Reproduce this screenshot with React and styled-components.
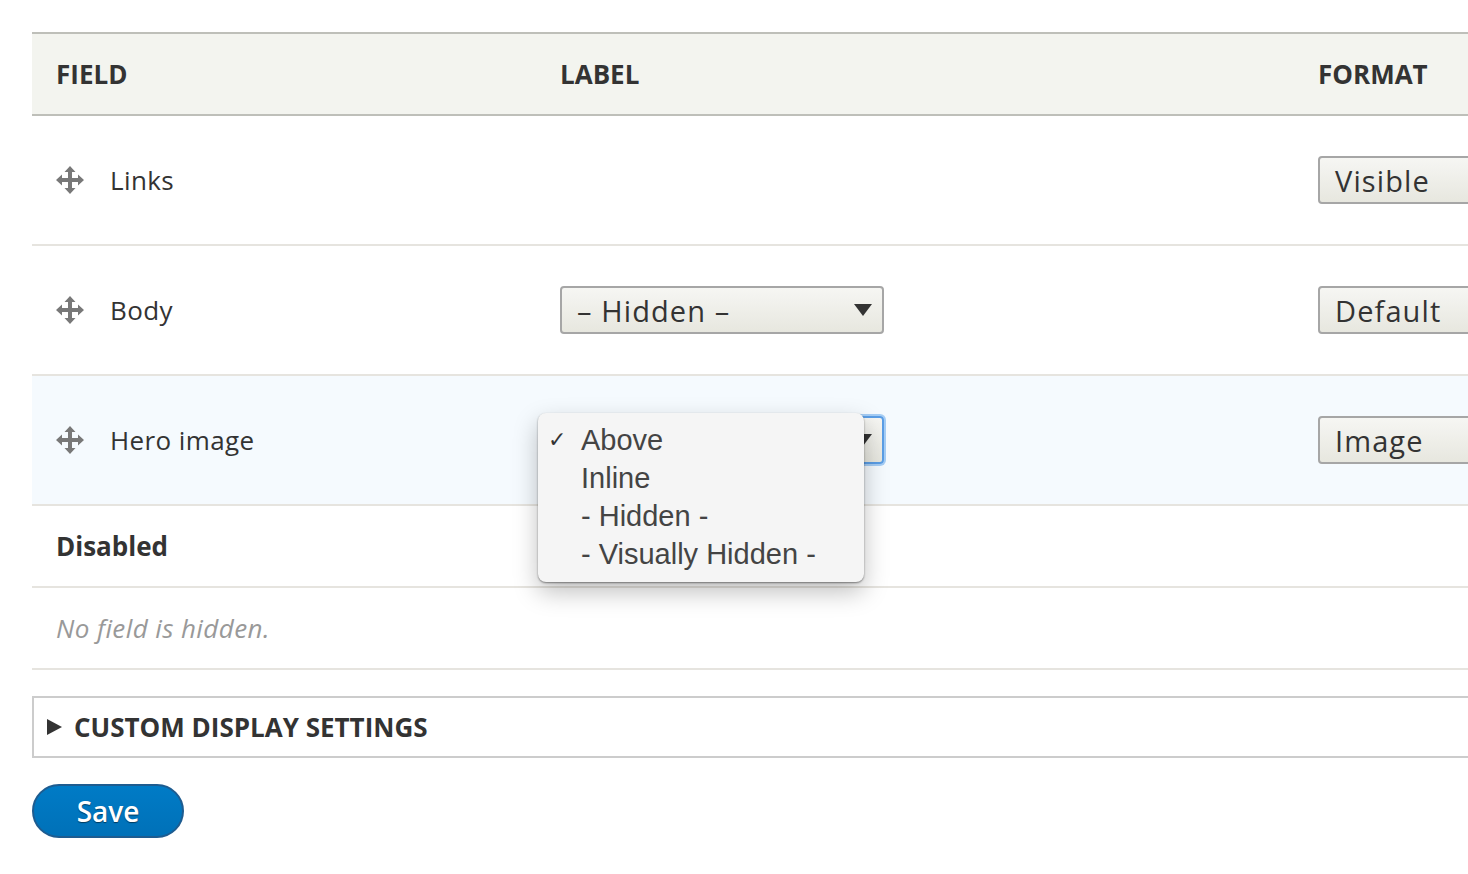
import styled, { createGlobalStyle } from "styled-components";

const GlobalStyle = createGlobalStyle`
  html, body {
    margin: 0;
    padding: 0;
    background: #fff;
    overflow: hidden;
  }
  body {
    font-family: "Open Sans", "Noto Sans", "Liberation Sans", sans-serif;
    color: #333;
  }
`;

const Page = styled.div`
  width: 1468px;
  height: 874px;
  box-sizing: border-box;
  padding: 32px 0 0 32px;
  overflow: hidden;
`;

const Row = styled.div`
  display: grid;
  grid-template-columns: 504px 758px 1fr;
  align-items: center;
  box-sizing: border-box;
  height: ${(p) => p.$height || 130}px;
  background: ${(p) => p.$bg || "#fff"};
  border-bottom: 2px solid #e6e4df;
`;

const HeaderRow = styled(Row)`
  height: 84px;
  background: #f3f4ef;
  border-top: 2px solid #bebfb9;
  border-bottom: 2px solid #bebfb9;
`;

const HeadCell = styled.div`
  padding-left: 24px;
  font-size: 26px;
  font-weight: 700;
  color: #333;
`;

const FieldCell = styled.div`
  display: flex;
  align-items: center;
  gap: 26px;
  padding-left: 24px;
  font-size: 26px;
  letter-spacing: 0.4px;
  color: #333;
`;

const Cell = styled.div`
  position: relative;
  padding-left: 24px;
`;

const Select = styled.div`
  display: flex;
  align-items: center;
  justify-content: space-between;
  box-sizing: border-box;
  width: ${(p) => p.$width || 324}px;
  height: 48px;
  padding: 0 10px 0 15px;
  border: 2px solid ${(p) => (p.$focus ? "#5b9ee6" : "#a6a6a6")};
  border-radius: 4px;
  background: linear-gradient(#f6f6f3, #e7e7df);
  box-shadow: ${(p) => (p.$focus ? "0 0 0 2px #a5cdf5" : "none")};
  font-size: 29px;
  letter-spacing: 1.1px;
  color: #333;
  white-space: nowrap;
`;

const Caret = styled.span`
  width: 0;
  height: 0;
  border-left: 9px solid transparent;
  border-right: 9px solid transparent;
  border-top: 12px solid #333;
`;

const Popup = styled.div`
  position: absolute;
  left: 2px;
  top: -3px;
  box-sizing: border-box;
  width: 326px;
  height: 169px;
  padding: 8px 0 0;
  background: #f5f5f5;
  border-radius: 8px;
  box-shadow: 0 1px 2px rgba(0, 0, 0, 0.45), 0 10px 24px rgba(0, 0, 0, 0.25);
  font-family: "Liberation Sans", Arial, sans-serif;
  font-size: 29px;
  color: #444;
`;

const Option = styled.div`
  position: relative;
  height: 38px;
  line-height: 38px;
  padding-left: 43px;
  white-space: nowrap;
`;

const Check = styled.span`
  position: absolute;
  left: 10px;
  top: 0;
  font-family: "DejaVu Sans", sans-serif;
  font-size: 22px;
  color: #333;
`;

const SectionRow = styled(Row)`
  display: flex;
  padding-left: 24px;
  height: 82px;
  font-size: 26px;
  font-weight: 700;
  color: #333;
`;

const EmptyRow = styled(Row)`
  display: flex;
  padding-left: 24px;
  height: 82px;
  font-size: 26px;
  font-style: italic;
  letter-spacing: 0.4px;
  color: #999;
`;

const Details = styled.div`
  display: flex;
  align-items: center;
  gap: 12px;
  box-sizing: border-box;
  height: 62px;
  margin-top: 26px;
  margin-right: -4px;
  padding-left: 13px;
  border: 2px solid #ccc;
  font-size: 26px;
  font-weight: 700;
  color: #333;
`;

const Arrow = styled.span`
  width: 0;
  height: 0;
  border-top: 8px solid transparent;
  border-bottom: 8px solid transparent;
  border-left: 15px solid #333;
`;

const SaveButton = styled.button`
  display: block;
  box-sizing: border-box;
  width: 152px;
  height: 54px;
  margin-top: 26px;
  border: 2px solid #1e5c90;
  border-radius: 27px;
  background: linear-gradient(#007bc6, #0071b8);
  color: #fff;
  font-family: inherit;
  font-size: 28px;
  font-weight: 600;
  text-shadow: 0 1px 1px rgba(0, 0, 0, 0.5);
`;

const MoveIcon = () => (
  <svg width="28" height="28" viewBox="0 0 28 28" fill="#787878">
    <path d="M14 0l5.5 6H16v6h6V8.5L28 14l-6 5.5V16h-6v6h3.5L14 28l-5.5-6H12v-6H6v3.5L0 14l6-5.5V12h6V6H8.5z" />
  </svg>
);

const rows = [
  { name: "Links", format: "Visible" },
  { name: "Body", label: "– Hidden –", format: "Default" },
  { name: "Hero image", popup: true, format: "Image", bg: "#f5fafe" },
];

const options = ["Above", "Inline", "- Hidden -", "- Visually Hidden -"];

export default function App() {
  return (
    <Page>
      <GlobalStyle />
      <HeaderRow>
        <HeadCell>FIELD</HeadCell>
        <HeadCell>LABEL</HeadCell>
        <HeadCell>FORMAT</HeadCell>
      </HeaderRow>
      {rows.map((r) => (
        <Row key={r.name} $bg={r.bg}>
          <FieldCell>
            <MoveIcon />
            {r.name}
          </FieldCell>
          <Cell>
            {r.label && (
              <Select>
                {r.label}
                <Caret />
              </Select>
            )}
            {r.popup && (
              <>
                <Select $focus>
                  Above
                  <Caret />
                </Select>
                <Popup>
                  {options.map((o, i) => (
                    <Option key={o}>
                      {i === 0 && <Check>✓</Check>}
                      {o}
                    </Option>
                  ))}
                </Popup>
              </>
            )}
          </Cell>
          <Cell>
            <Select $width={300}>{r.format}</Select>
          </Cell>
        </Row>
      ))}
      <SectionRow>Disabled</SectionRow>
      <EmptyRow>No field is hidden.</EmptyRow>
      <Details>
        <Arrow />
        CUSTOM DISPLAY SETTINGS
      </Details>
      <SaveButton>Save</SaveButton>
    </Page>
  );
}
